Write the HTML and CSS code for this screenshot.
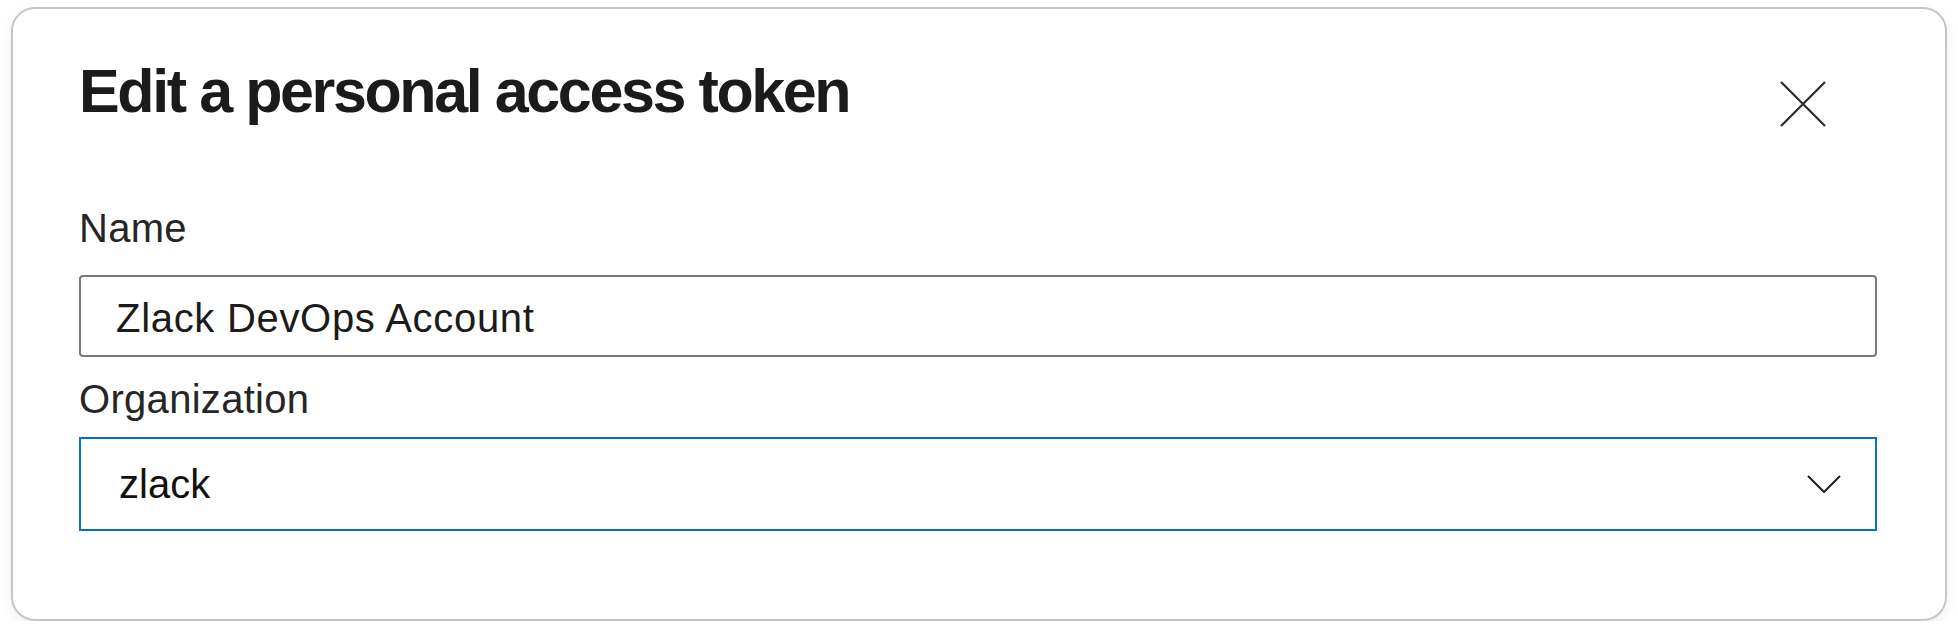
FILE: index.html
```html
<!DOCTYPE html>
<html>
<head>
<meta charset="utf-8">
<title>Edit a personal access token</title>
<link rel="stylesheet" href="styles.css">
</head>
<body>
<div id="dialog">
  <div class="header">
    <div id="dialog_title">Edit a personal access token</div>
    <button class="close" type="button" title="Close">
      <svg width="46" height="46" viewBox="0 0 46 46"><path d="M1 1L45 45M45 1L1 45" stroke="#2b2b2b" stroke-width="2.2" fill="none"/></svg>
    </button>
  </div>
  <div class="field">
    <label class="label" for="name">Name</label>
    <input class="textbox" id="name" type="text" value="Zlack DevOps Account">
  </div>
  <div class="field">
    <div class="label label_org">Organization</div>
    <div class="dropdown">
      <span>zlack</span>
      <svg width="34" height="18" viewBox="0 0 34 18"><path d="M1 1L17 17L33 1" stroke="#1f1f1f" stroke-width="2" fill="none"/></svg>
    </div>
  </div>
</div>
</body>
</html>
```
FILE: styles.css
```css
body {
    margin: 0;
    background-color: #fff;
    font-family: "Liberation Sans", Arial, sans-serif;
    color: #1f1f1f;
}
#dialog {
    margin: 7px 11px 0 11px;
    width: 1936px;
    box-sizing: border-box;
    border: solid 2px #c6c6c6;
    border-radius: 24px;
    padding: 46px 68px 88px 66px;
    box-shadow: 0 4px 12px rgba(0, 0, 0, 0.07);
    background: #fff;
}
.header {
    display: flex;
    justify-content: space-between;
    align-items: flex-start;
}
#dialog_title {
    font-size: 61px;
    font-weight: bold;
    line-height: 72px;
    letter-spacing: -2.4px;
    color: #1b1b1b;
}
.close {
    width: 46px;
    height: 46px;
    padding: 0;
    margin: 26px 51px 0 0;
    border: none;
    background: none;
}
.close svg {
    display: block;
}
.label {
    display: block;
    margin-top: 77px;
    font-size: 40px;
    line-height: 48px;
    letter-spacing: 0.3px;
    color: #262626;
}
.label_org {
    margin-top: 18px;
}
.textbox {
    display: block;
    box-sizing: border-box;
    width: 100%;
    height: 82px;
    margin-top: 23px;
    padding: 4px 0 0 35px;
    border: solid 2px #7a7a7a;
    border-radius: 4px;
    font-family: "Liberation Sans", Arial, sans-serif;
    font-size: 40px;
    letter-spacing: 0.7px;
    color: #1b1b1b;
    outline: none;
}
.dropdown {
    display: flex;
    justify-content: space-between;
    align-items: center;
    box-sizing: border-box;
    height: 94px;
    margin-top: 14px;
    padding: 0 34px 0 38px;
    border: solid 2px #0a6ccb;
    font-size: 40px;
    line-height: 48px;
    color: #111;
}
.dropdown svg {
    display: block;
}
```
